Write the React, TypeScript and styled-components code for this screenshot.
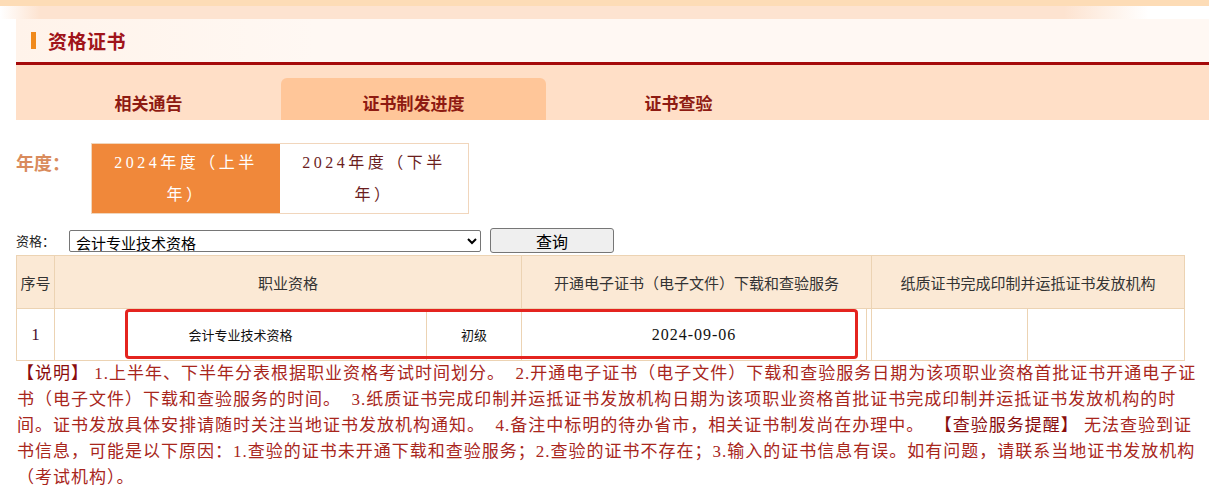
import React, { useState } from 'react';
import styled, { createGlobalStyle } from 'styled-components';

const GlobalStyle = createGlobalStyle`
  body {
    margin: 0;
    background: #ffffff;
    font-family: "Noto Sans CJK SC", "Noto Sans", sans-serif;
  }
`;

const years = ['2024年度（上半年）', '2024年度（下半年）'];
const tabs = ['相关通告', '证书制发进度', '证书查验'];

const App: React.FC = () => {
  const [tab, setTab] = useState(1);
  const [year, setYear] = useState(0);

  const noteLines: React.ReactNode[] = [
    <>
      <Strong>【说明】</Strong> 1.上半年、下半年分表根据职业资格考试时间划分。&nbsp; 2.开通电子证书（电子文件）下载和查验服务日期为该项职业资格首批证书开通电子证
    </>,
    <>书（电子文件）下载和查验服务的时间。&nbsp; 3.纸质证书完成印制并运抵证书发放机构日期为该项职业资格首批证书完成印制并运抵证书发放机构的时</>,
    <>
      间。证书发放具体安排请随时关注当地证书发放机构通知。&nbsp; 4.备注中标明的待办省市，相关证书制发尚在办理中。&nbsp;{' '}
      <Strong>【查验服务提醒】</Strong> 无法查验到证
    </>,
    <>书信息，可能是以下原因：1.查验的证书未开通下载和查验服务；2.查验的证书不存在；3.输入的证书信息有误。如有问题，请联系当地证书发放机构</>,
    <>（考试机构）。</>,
  ];

  return (
    <>
      <GlobalStyle />
      <TopStrip />
      <FadeBand />
      <Main>
        <TitleBar>
          <TitleMark />
          <Title>资格证书</Title>
        </TitleBar>

        <TabBar>
          {tabs.map((t, i) => (
            <Tab key={t} $active={i === tab} onClick={() => setTab(i)}>
              {t}
            </Tab>
          ))}
        </TabBar>

        <YearRow>
          <YearLabel>年度：</YearLabel>
          <YearBox>
            {years.map((y, i) => (
              <YearButton key={y} $active={i === year} onClick={() => setYear(i)}>
                {y}
              </YearButton>
            ))}
          </YearBox>
        </YearRow>

        <QueryRow>
          <QueryLabel>资格：</QueryLabel>
          <Select defaultValue="kj">
            <option value="kj">会计专业技术资格</option>
          </Select>
          <QueryButton>查询</QueryButton>
        </QueryRow>

        <TableWrap>
          <Table>
            <colgroup>
              <col style={{ width: 38 }} />
              <col style={{ width: 372 }} />
              <col style={{ width: 95 }} />
              <col style={{ width: 345 }} />
              <col style={{ width: 5 }} />
              <col style={{ width: 156 }} />
              <col style={{ width: 157 }} />
            </colgroup>
            <thead>
              <tr>
                <Th>序号</Th>
                <Th colSpan={2}>职业资格</Th>
                <Th colSpan={2}>开通电子证书（电子文件）下载和查验服务</Th>
                <Th colSpan={2}>纸质证书完成印制并运抵证书发放机构</Th>
              </tr>
            </thead>
            <tbody>
              <tr>
                <NumCell>1</NumCell>
                <Td>会计专业技术资格</Td>
                <Td>初级</Td>
                <DateCell>2024-09-06</DateCell>
                <Td />
                <Td />
                <Td />
              </tr>
            </tbody>
          </Table>
          <Highlight />
        </TableWrap>

        <Notes>
          {noteLines.map((line, i) => (
            <NoteLine key={i}>{line}</NoteLine>
          ))}
        </Notes>
      </Main>
    </>
  );
};

const TopStrip = styled.div`
  height: 6px;
  background: #fddcb6;
`;

const FadeBand = styled.div`
  height: 13px;
  background: linear-gradient(
    to right,
    #ffffff 0,
    #fde3d0 40px,
    #fde3d0 88%,
    #ffffff 95%
  );
`;

const Main = styled.div`
  padding-left: 16px;
`;

const TitleBar = styled.div`
  display: flex;
  align-items: center;
  gap: 12px;
  height: 43px;
  padding-left: 15px;
  background: linear-gradient(to right, #fff3ea, #fff8f3 25%, #fff8f3);
  border-bottom: 3px solid #a50a0a;
`;

const TitleMark = styled.span`
  width: 5px;
  height: 17px;
  background: #f08a1c;
`;

const Title = styled.h1`
  margin: 0;
  font-size: 19px;
  font-weight: 700;
  color: #a0141a;
  letter-spacing: 0.5px;
`;

const TabBar = styled.div`
  display: flex;
  align-items: flex-end;
  height: 55px;
  background: #ffdfc7;
`;

const Tab = styled.div<{ $active: boolean }>`
  width: 265px;
  height: 42px;
  box-sizing: border-box;
  padding-top: 12px;
  text-align: center;
  font-size: 17px;
  font-weight: 700;
  line-height: 26px;
  color: #8e1b12;
  border-radius: 6px 6px 0 0;
  background: ${(p) => (p.$active ? '#ffc699' : 'transparent')};
  cursor: pointer;
`;

const YearRow = styled.div`
  display: flex;
  align-items: flex-start;
  margin-top: 23px;
`;

const YearLabel = styled.div`
  width: 75px;
  padding-top: 5px;
  font-family: "Liberation Serif", "Noto Sans CJK SC", serif;
  font-size: 18px;
  font-weight: 700;
  line-height: 32px;
  color: #d98b5c;
`;

const YearBox = styled.div`
  display: flex;
  border: 1px solid #f1d6bc;
`;

const YearButton = styled.div<{ $active: boolean }>`
  width: 188px;
  height: 69px;
  box-sizing: border-box;
  padding: 3px 21px 0;
  text-align: center;
  font-family: "Liberation Serif", "Noto Sans CJK SC", serif;
  font-size: 16px;
  line-height: 32px;
  letter-spacing: 3.5px;
  color: ${(p) => (p.$active ? '#ffffff' : '#6b1e1e')};
  background: ${(p) => (p.$active ? '#f0883a' : '#ffffff')};
  cursor: pointer;
`;

const QueryRow = styled.div`
  display: flex;
  align-items: center;
  margin-top: 14px;
  height: 25px;
`;

const QueryLabel = styled.span`
  width: 53px;
  font-size: 13px;
  color: #222222;
`;

const Select = styled.select`
  width: 412px;
  height: 22px;
  padding: 0 2px;
  font-family: "Noto Sans CJK SC", sans-serif;
  font-size: 15px;
  line-height: 20px;
  color: #000000;
  background: #ffffff;
  border: 1px solid #767676;
  border-radius: 2px;
`;

const QueryButton = styled.button`
  width: 124px;
  height: 25px;
  margin-left: 9px;
  padding: 0;
  font-family: "Noto Sans CJK SC", sans-serif;
  font-size: 16px;
  line-height: 22px;
  color: #000000;
  background: #efefef;
  border: 1px solid #767676;
  border-radius: 3px;
`;

const TableWrap = styled.div`
  position: relative;
  width: 1169px;
  margin-top: 2px;
`;

const Table = styled.table`
  width: 1169px;
  table-layout: fixed;
  border-collapse: collapse;
  border: 1px solid #ecd3b3;
`;

const Th = styled.th`
  height: 52px;
  padding: 0;
  font-size: 15px;
  font-weight: 400;
  color: #333333;
  background: #fbe9d5;
  border: 1px solid #ecd3b3;
`;

const Td = styled.td`
  height: 51px;
  padding: 0;
  text-align: center;
  font-size: 13px;
  color: #111111;
  background: #ffffff;
  border: 1px solid #ecd3b3;
`;

const NumCell = styled(Td)`
  font-family: "Liberation Serif", serif;
  font-size: 17px;
  color: #4a1232;
`;

const DateCell = styled(Td)`
  font-family: "Liberation Serif", serif;
  font-size: 16px;
  letter-spacing: 1px;
  color: #111111;
`;

const Highlight = styled.div`
  position: absolute;
  left: 109px;
  top: 54px;
  width: 733px;
  height: 50px;
  box-sizing: border-box;
  border: 3px solid #e4241f;
  border-radius: 4px;
  pointer-events: none;
`;

const Notes = styled.div`
  padding-left: 1px;
  font-family: "Liberation Serif", "Noto Sans CJK SC", serif;
  font-size: 17px;
  line-height: 26px;
  letter-spacing: 1px;
  color: #a8261c;
`;

const NoteLine = styled.div`
  white-space: nowrap;
`;

const Strong = styled.span`
  color: #8a0d0d;
`;

export default App;
